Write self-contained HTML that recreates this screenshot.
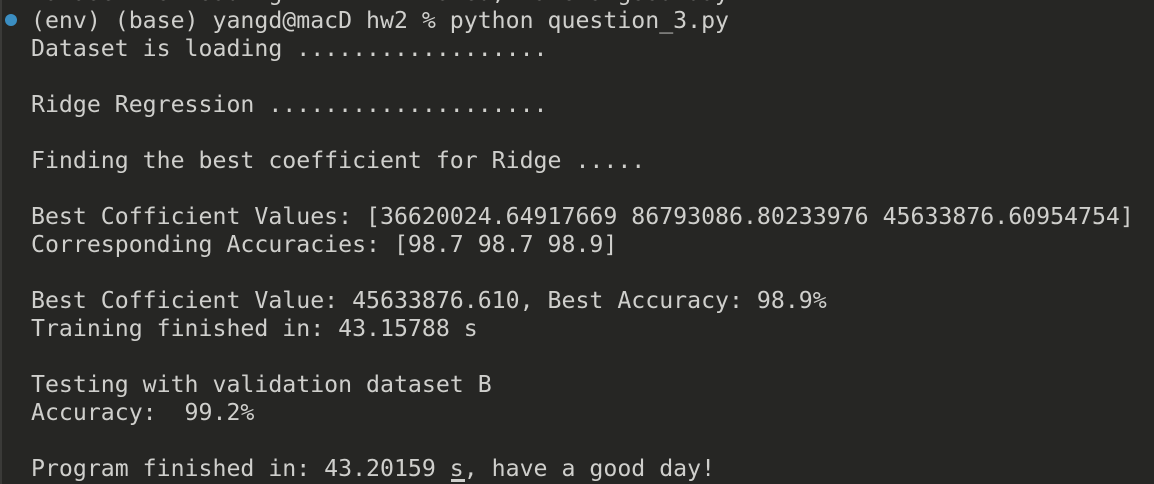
<!DOCTYPE html><html><head><style>
html,body{margin:0;width:1154px;height:484px;overflow:hidden;background:#262624;}
body{position:relative;}
.t{position:absolute;left:31px;top:-21px;font-family:"DejaVu Sans Mono","Liberation Mono",monospace;font-size:23.2px;line-height:28px;color:#cfcfcc;white-space:pre;}
.bar{position:absolute;left:0;top:0;width:2px;height:484px;background:#3a3a38;}
.dot{position:absolute;left:5px;top:14px;width:12px;height:12px;border-radius:50%;background:#3b8ec2;}
.cur{position:absolute;left:451px;top:479px;width:14px;height:3px;background:#cfcfcc;}
</style></head><body>
<div class="bar"></div><div class="dot"></div>
<div class="t">Dataset is loading ...   finished, have a good day
(env) (base) yangd@macD hw2 % python question_3.py
Dataset is loading ..................

Ridge Regression ....................

Finding the best coefficient for Ridge .....

Best Cofficient Values: [36620024.64917669 86793086.80233976 45633876.60954754]
Corresponding Accuracies: [98.7 98.7 98.9]

Best Cofficient Value: 45633876.610, Best Accuracy: 98.9%
Training finished in: 43.15788 s

Testing with validation dataset B
Accuracy:  99.2%

Program finished in: 43.20159 s, have a good day!</div>
<div class="cur"></div>
</body></html>
